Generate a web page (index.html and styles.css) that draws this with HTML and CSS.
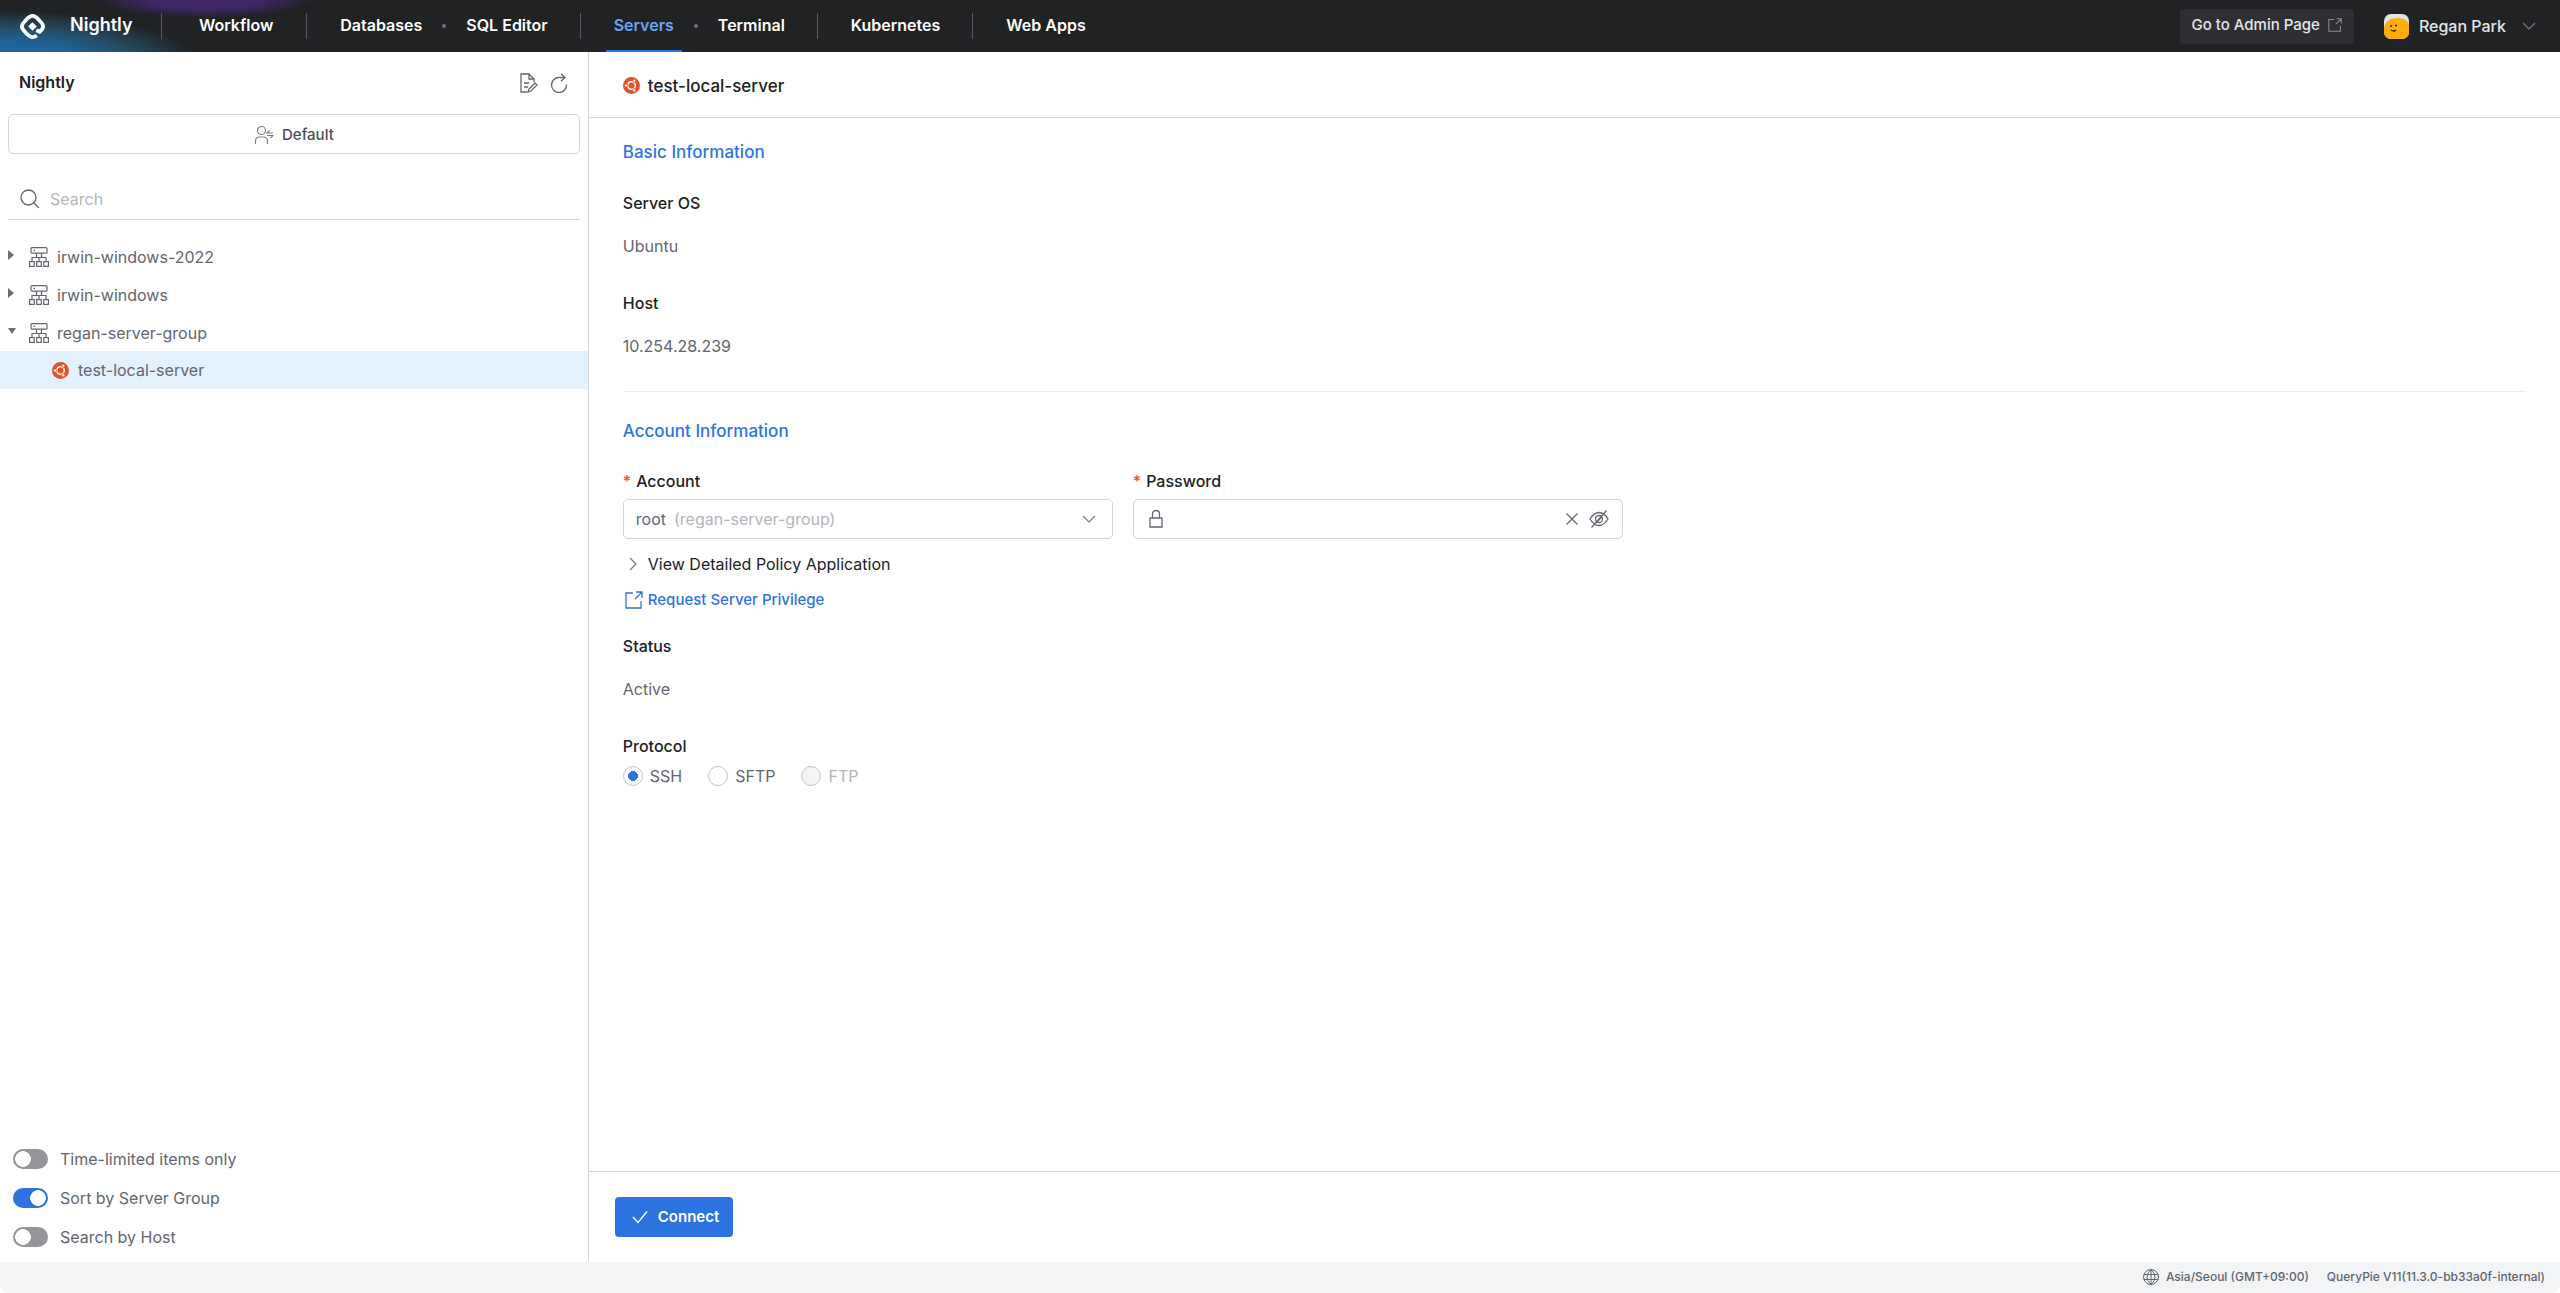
FILE: index.html
```html
<!DOCTYPE html>
<html lang="en">
<head>
<meta charset="utf-8">
<meta name="viewport" content="width=device-width, initial-scale=1">
<title>Nightly - Servers</title>
<link rel="stylesheet" href="styles.css">
</head>
<body>
<svg class="defs" aria-hidden="true">
  <symbol id="ubuntu" viewBox="0 0 16 16">
    <circle cx="8" cy="8" r="8" fill="#e2542a"/>
    <circle cx="8" cy="8" r="3.600" fill="none" stroke="#fff" stroke-width="1.400"/>
    <g stroke="#e2542a" stroke-width="0.8" fill="#fff">
      <circle cx="2.900" cy="8" r="1.500"/><circle cx="10.600" cy="3.500" r="1.500"/><circle cx="10.600" cy="12.500" r="1.500"/>
    </g>
  </symbol>
  <symbol id="group" viewBox="0 0 20 20">
    <g fill="none" stroke="currentColor" stroke-width="1.200">
      <rect x="2" y="0.6" width="16" height="5.600" rx="1"/><path d="M4.500 3.400h1.500M7.500 6.200v4.300M12.500 6.200v4.300M3 14.500v-4h14v4M10 10.500v4"/>
      <rect x="0.6" y="14.600" width="4.600" height="4.800"/><rect x="7.700" y="14.600" width="4.600" height="4.800"/><rect x="14.800" y="14.600" width="4.600" height="4.800"/>
    </g>
  </symbol>
  <symbol id="external" viewBox="0 0 18 18">
    <path d="M8 2H1v15h15v-7M11 1h6v6M17 1l-7 7" fill="none" stroke="currentColor" stroke-width="1.3"/>
  </symbol>
  <symbol id="chevron" viewBox="0 0 14 14">
    <path d="M1 4l6 6 6-6" fill="none" stroke="currentColor" stroke-width="1.2"/>
  </symbol>
</svg>
<div class="app">
  <header class="topbar">
    <svg class="logo" viewBox="0 0 26 26" aria-hidden="true">
      <path d="M17.500 22.500Q15 24 13 24 Q10 24 6 19.500 Q2 15.500 2 13 Q2 10.500 6 6.500 Q10 2 13 2 Q16 2 20 6.500 Q24 10.500 24 13 Q24 15.500 20.500 18.500L17 17" fill="none" stroke="#fff" stroke-width="4"/>
      <path d="M13 8.500l4.500 4.500-4.500 4.500-4.500-4.500z" fill="#fff"/>
    </svg>
    <span class="brand">Nightly</span>
    <nav class="nav">
      <span class="nav-group"><a href="#">Workflow</a></span>
      <span class="nav-group"><a href="#">Databases</a><i class="dot"></i><a href="#">SQL Editor</a></span>
      <span class="nav-group"><a href="#" class="active" aria-current="page">Servers</a><i class="dot"></i><a href="#">Terminal</a></span>
      <span class="nav-group"><a href="#">Kubernetes</a></span>
      <span class="nav-group"><a href="#">Web Apps</a></span>
    </nav>
    <a class="admin" href="#">Go to Admin Page <svg viewBox="0 0 18 18" aria-hidden="true"><use href="#external"/></svg></a>
    <button class="user" type="button">
      <svg class="avatar" viewBox="0 0 25 25" aria-hidden="true">
        <rect width="25" height="25" rx="7" fill="#dfe3e8"/>
        <path d="M0 13C2 7 7 4 13 4s10 2 12 6v8a7 7 0 0 1-7 7H7a7 7 0 0 1-7-7z" fill="#ffad0d"/>
        <path d="M7 16q3 2 5 0" fill="none" stroke="#332211" stroke-width="1.300"/><circle cx="7" cy="12" r="1" fill="#332211"/><circle cx="12" cy="11.500" r="1" fill="#332211"/>
      </svg>
      Regan Park
      <svg class="chev" viewBox="0 0 14 14" aria-hidden="true"><use href="#chevron"/></svg>
    </button>
  </header>
  <div class="body">
    <aside class="sidebar">
      <div class="side-head">
        <h2>Nightly</h2>
        <button type="button" class="icon-button" aria-label="Edit notes"><svg viewBox="0 0 18 20"><path d="M7 19H1V1h8l5 5v3M9 1v5h5M4 10h5M4 14h4M8 19l1-3 6-6 2 2-6 6z" fill="none" stroke="currentColor" stroke-width="1.300"/></svg></button>
        <button type="button" class="icon-button" aria-label="Refresh"><svg viewBox="0 0 18 20"><path d="M16.500 11.500A7.500 7.500 0 1 1 9 4.500H15M11 0.800l4 3.700-4 3.700" fill="none" stroke="currentColor" stroke-width="1.300"/></svg></button>
      </div>
      <button type="button" class="role"><svg viewBox="0 0 20 20" aria-hidden="true"><path d="M11.500 5.500a4 4 0 1 1-8 0 4 4 0 0 1 8 0zM1.500 19v-3q0-4 4-4h4q4 0 4 4v3M19 8h-6l2.500-2.500M13 10.500h6L16.500 13" fill="none" stroke="currentColor" stroke-width="1.200"/></svg>Default</button>
      <label class="search"><svg viewBox="0 0 20 20" aria-hidden="true"><path d="M16 8.500a7.500 7.500 0 1 1-15 0 7.500 7.500 0 0 1 15 0zM14 14l5 5" fill="none" stroke="currentColor" stroke-width="1.300"/></svg><input type="search" placeholder="Search" aria-label="Search"></label>
      <ul class="tree">
        <li><a href="#"><i class="arrow"></i><svg viewBox="0 0 20 20" class="group-icon"><use href="#group"/></svg>irwin-windows-2022</a></li>
        <li><a href="#"><i class="arrow"></i><svg viewBox="0 0 20 20" class="group-icon"><use href="#group"/></svg>irwin-windows</a></li>
        <li><a href="#"><i class="arrow open"></i><svg viewBox="0 0 20 20" class="group-icon"><use href="#group"/></svg>regan-server-group</a>
          <ul><li><a href="#" class="leaf"><svg viewBox="0 0 16 16" class="os-icon"><use href="#ubuntu"/></svg>test-local-server</a></li></ul>
        </li>
      </ul>
      <div class="toggles">
        <label><input type="checkbox" role="switch">Time-limited items only</label>
        <label><input type="checkbox" role="switch" checked>Sort by Server Group</label>
        <label><input type="checkbox" role="switch">Search by Host</label>
      </div>
    </aside>
    <main class="main">
      <div class="title"><svg viewBox="0 0 16 16" class="os-icon"><use href="#ubuntu"/></svg><h1>test-local-server</h1></div>
      <div class="content">
        <section class="basic">
          <h2>Basic Information</h2>
          <dl><dt>Server OS</dt><dd>Ubuntu</dd><dt>Host</dt><dd>10.254.28.239</dd></dl>
        </section>
        <section class="account">
          <h2>Account Information</h2>
          <div class="fields">
            <div class="field">
              <label for="account"><span class="star">*</span>Account</label>
              <button id="account" type="button" class="control" aria-haspopup="listbox">root <span class="muted">(regan-server-group)</span><svg class="chev" viewBox="0 0 14 14" aria-hidden="true"><use href="#chevron"/></svg></button>
            </div>
            <div class="field">
              <label for="password"><span class="star">*</span>Password</label>
              <div class="control password">
                <svg class="lock" viewBox="0 0 16 20" aria-hidden="true"><path d="M2 9h12v9H2zM4.500 9V5q0-3.500 3.500-3.500T11.500 5v4" fill="none" stroke="currentColor" stroke-width="1.300"/></svg>
                <input id="password" type="password">
                <button type="button" aria-label="Clear"><svg class="clear" viewBox="0 0 14 14"><path d="M1.500 1.500l11 11M12.500 1.500l-11 11" fill="none" stroke="currentColor" stroke-width="1.300"/></svg></button>
                <button type="button" aria-label="Show password"><svg class="eye" viewBox="0 0 20 20"><path d="M1 10q4-6.500 9-6.500T19 10q-4 6.500-9 6.500T1 10zM13.500 10a3.500 3.500 0 1 1-7 0 3.500 3.500 0 0 1 7 0zM2.500 18.500l15-17M9 12l3-3.500" fill="none" stroke="currentColor" stroke-width="1.300"/></svg></button>
              </div>
            </div>
          </div>
          <button type="button" class="policy"><svg class="chev right" viewBox="0 0 14 14" aria-hidden="true"><use href="#chevron"/></svg>View Detailed Policy Application</button>
          <a href="#" class="request"><svg viewBox="0 0 18 18" aria-hidden="true"><use href="#external"/></svg>Request Server Privilege</a>
          <dl><dt>Status</dt><dd>Active</dd></dl>
          <fieldset>
            <legend>Protocol</legend>
            <div class="radios">
              <label><input type="radio" name="protocol" checked>SSH</label>
              <label><input type="radio" name="protocol">SFTP</label>
              <label class="off"><input type="radio" name="protocol" disabled>FTP</label>
            </div>
          </fieldset>
        </section>
      </div>
      <div class="actions"><button type="button" class="connect"><svg viewBox="0 0 16 16" aria-hidden="true"><path d="M1 8l5 5.500L15 2.500" fill="none" stroke="currentColor" stroke-width="1.300"/></svg>Connect</button></div>
    </main>
  </div>
  <footer class="status">
    <span class="zone"><svg viewBox="0 0 16 16" aria-hidden="true"><path d="M15.500 8a7.500 7.500 0 1 1-15 0 7.500 7.500 0 0 1 15 0zM8 .5v15M8 .5q-4 3.500-4 7.500t4 7.500q4-3.500 4-7.500T8 .5zM1 5.500h14M1 10.500h14" fill="none" stroke="currentColor" stroke-width="1"/></svg>Asia/Seoul (GMT+09:00)</span>
    <span>QueryPie V11(11.3.0-bb33a0f-internal)</span>
  </footer>
</div>
</body>
</html>
```
FILE: styles.css
```css
* { box-sizing: border-box; }
body { margin: 0; background: #fff; color: #202124; font: 16px/24px Inter, sans-serif; }
.defs { position: absolute; width: 0; height: 0; }
h1, h2, ul, dl, dd { margin: 0; padding: 0; }
ul { list-style: none; }
a { color: inherit; text-decoration: none; }
button, input { font: inherit; color: inherit; }
button { padding: 0; border: 0; background: none; cursor: pointer; }
svg { flex: none; display: block; }
.app { display: flex; flex-direction: column; min-height: 100vh; }

.topbar {
  display: flex; align-items: center; height: 52px; padding: 0 24px 0 20px; color: #fff; font-weight: 600;
  background:
    radial-gradient(ellipse 110px 18px at 205px 0, #3f2765 50%, transparent),
    radial-gradient(ellipse 200px 54px at 0 64px, #1f639b 40%, #24506a 65%, transparent),
    #202224;
}
.logo { width: 25px; height: 25px; margin-right: 25px; }
.brand { width: 91px; padding-bottom: 2px; font-size: 18px; }
.nav { display: flex; flex: 1; height: 52px; align-items: center; }
.nav-group { display: flex; align-items: center; height: 26px; padding: 0 24px 0 25px; border-left: 1px solid #55585e; }
.nav-group:first-child { padding: 0 25px 0 29px; }
.nav-group a { display: flex; align-items: center; height: 52px; padding: 0 8px 2px; }
.nav-group a.active { color: #6ea4f4; box-shadow: inset 0 -2px #2d74e1; }
.dot { width: 4px; height: 4px; margin: 0 12px; border-radius: 50%; background: #6c7078; }
.admin { display: flex; align-items: center; gap: 8px; height: 35px; padding: 0 12px 2px; border-radius: 4px; background: #2e2f35; color: #e4e6ea; font-size: 15px; font-weight: 500; }
.admin svg { width: 14px; height: 14px; color: #8a8d94; }
.user { display: flex; align-items: center; gap: 10px; margin-left: 30px; color: #e4e6ea; font-weight: 500; }
.avatar { width: 25px; height: 25px; }
.chev { width: 14px; height: 14px; color: #74787f; }
.user .chev { margin-left: 6px; }

.body { display: flex; flex: 1; }
.sidebar { display: flex; flex-direction: column; flex: none; width: 23%; border-right: 1px solid #d2d4d8; color: #62666e; }
.side-head { display: flex; align-items: center; gap: 12px; height: 62px; padding: 0 20px 0 19px; }
.side-head h2 { flex: 1; padding-bottom: 2px; color: #202124; font-size: 16px; font-weight: 600; }
.icon-button svg { width: 18px; height: 20px; }
.role { display: flex; align-items: center; justify-content: center; gap: 8px; height: 40px; margin: 0 8px; padding-top: 2px; border: 1px solid #d2d4d8; border-radius: 5px; color: #4b4e55; font-size: 15px; font-weight: 500; }
.role svg { width: 20px; height: 20px; color: #7d8087; }
.search { display: flex; align-items: center; gap: 10px; height: 42px; margin: 24px 8px 17px; padding: 0 12px; border-bottom: 1px solid #d2d4d8; }
.search svg { width: 20px; height: 20px; }
.search input { flex: 1; padding: 0; border: 0; outline: 0; background: none; }
.search input::placeholder { color: #b3b6bb; }
.tree a { display: flex; align-items: center; height: 38px; padding: 2px 8px 0; }
.tree a.leaf { gap: 9px; padding: 0 0 0 52px; background: #e3f1fd; }
.arrow { width: 21px; padding-bottom: 4px; }
.arrow::before { content: ""; display: block; width: 0; border: 5px solid transparent; border-left: 6px solid #6b6e75; border-right: 0; }
.arrow.open::before { border: 4px solid transparent; border-top: 6px solid #6b6e75; border-bottom: 0; }
.group-icon { width: 20px; height: 20px; margin-right: 8px; }
.os-icon { width: 17px; height: 17px; }
.toggles { display: grid; gap: 15px; margin-top: auto; padding: 0 13px 13px; }
.toggles label { display: flex; align-items: center; gap: 12px; height: 24px; }
.toggles input { appearance: none; width: 35px; height: 20px; margin: 0; border-radius: 10px; background: radial-gradient(circle 8px at 10px 50%, #fff 95%, transparent) #939598; }
.toggles input:checked { background: radial-gradient(circle 8px at 25px 50%, #fff 95%, transparent) #2d74e1; }

.main { display: flex; flex: 1; flex-direction: column; min-width: 0; }
.title { display: flex; align-items: center; gap: 8px; height: 66px; padding: 2px 0 0 34px; border-bottom: 1px solid #d2d4d8; }
.title h1 { font-size: 17px; font-weight: 500; }
.content { flex: 1; padding: 22px 34px; }
.content h2 { color: #2d74e1; font-size: 17px; line-height: 24px; font-weight: 500; }
dt { font-weight: 500; }
dd { margin: 19px 0 33px; color: #62666e; }
.basic { border-bottom: 1px solid #ebecee; }
.basic dl { padding-top: 27px; }
.account { padding-top: 27px; }
.fields { display: flex; gap: 20px; padding-top: 26px; }
.field { width: 490px; }
.field label { display: flex; gap: 5px; margin-bottom: 6px; font-weight: 500; }
.star { color: #e2542a; }
.control { display: flex; align-items: center; width: 100%; height: 40px; padding: 0 16px 0 12px; border: 1px solid #d2d4d8; border-radius: 5px; color: #62666e; }
.muted { margin-left: 8px; color: #b3b6bb; }
.control .chev { margin-left: auto; }
.password { padding: 0 13px; }
.password input { flex: 1; min-width: 0; border: 0; outline: 0; background: none; }
.lock { width: 18px; height: 20px; }
.clear { width: 14px; height: 14px; margin-right: 10px; }
.eye { width: 20px; height: 20px; }
.policy, .request { display: flex; align-items: center; gap: 5px; height: 24px; }
.policy { margin-top: 13px; }
.policy .chev { width: 14px; height: 14px; margin: 0 3px; transform: rotate(-90deg); }
.request { width: max-content; margin: 12px 0 22px; padding-left: 2px; color: #2d74e1; font-size: 15px; font-weight: 500; }
.request svg { width: 18px; height: 18px; }
fieldset { min-width: 0; margin: 0; padding: 0; border: 0; }
legend { padding: 0; font-weight: 500; }
.radios { display: flex; gap: 26px; padding-top: 6px; color: #62666e; }
.radios label { display: flex; align-items: center; gap: 7px; }
.radios input { appearance: none; width: 20px; height: 20px; margin: 0; border: 1px solid #c3c5ca; border-radius: 50%; background: #fff; }
.radios input:checked { background: radial-gradient(circle 5px, #2d74e1 95%, transparent); }
.radios input:disabled { background: #f3f4f6; }
.radios .off { color: #b3b6bb; }
.actions { display: flex; height: 91px; padding: 25px 26px; border-top: 1px solid #d2d4d8; }
.connect { display: flex; align-items: center; gap: 10px; height: 40px; padding: 0 14px 0 17px; border-radius: 4px; background: #2d74e1; color: #fff; font-size: 15px; font-weight: 600; }
.connect svg { width: 16px; height: 16px; }
.status { display: flex; align-items: center; justify-content: flex-end; gap: 18px; height: 31px; padding: 0 15px 2px; border-radius: 0 0 10px 10px; background: #f3f4f6; color: #62666e; font-size: 12px; font-weight: 500; }
.zone { display: flex; align-items: center; gap: 7px; }
.zone svg { width: 16px; height: 16px; }
```
